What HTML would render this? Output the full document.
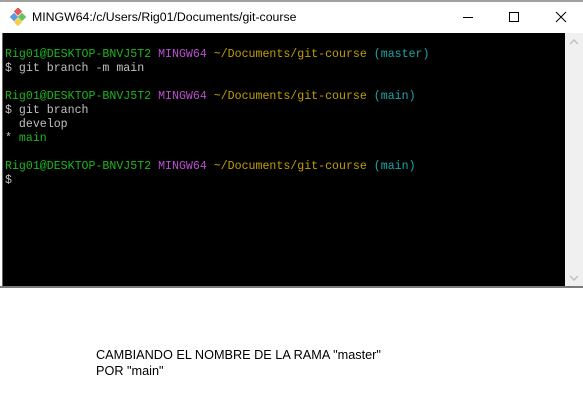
<!DOCTYPE html>
<html><head><meta charset="utf-8"><style>
html,body{margin:0;padding:0;width:583px;height:416px;background:#fff;overflow:hidden;position:relative;font-family:"Liberation Sans",sans-serif}
.topline{position:absolute;left:0;top:0;width:583px;height:2px;background:#a0a0a0}
.title{position:absolute;left:32px;top:10px;font-size:12.3px;color:#000}
.term{position:absolute;left:2px;top:33px;width:563px;height:254px;background:#000;border-left:1px solid #666}
.sb{position:absolute;left:565px;top:33px;width:18px;height:254px;background:#f0f0f0}
.bot{position:absolute;left:0;top:286px;width:583px;height:2px;background:#7a7a7a}
pre{position:absolute;left:5px;top:48px;margin:0;font-family:"Liberation Mono",monospace;font-size:11.6px;line-height:14px;color:#c0c0c0}
.g{color:#1db51d}.m{color:#b94fd0}.y{color:#c0a000}.c{color:#19a8a8}
.cap{position:absolute;left:96px;top:347px;font-size:12.7px;line-height:16px;color:#000}
</style></head><body>
<div class="topline"></div>
<svg style="position:absolute;left:10px;top:8px" width="18" height="18" viewBox="0 0 18 18">
<rect x="5" y="0.5" width="6" height="6" transform="rotate(45 8 3.5)" fill="#e05a5a"/>
<rect x="1" y="6" width="6" height="6" transform="rotate(45 4 9)" fill="#5a9ae0"/>
<rect x="9" y="6" width="6" height="6" transform="rotate(45 12 9)" fill="#6ac060"/>
<rect x="5" y="11" width="6" height="6" transform="rotate(45 8 14)" fill="#f0d050"/>
</svg>
<div class="title">MINGW64:/c/Users/Rig01/Documents/git-course</div>
<svg style="position:absolute;left:462px;top:10px" width="120" height="16">
<line x1="1" y1="7.5" x2="11" y2="7.5" stroke="#000"/>
<rect x="47.5" y="2.5" width="9" height="9" fill="none" stroke="#000"/>
<line x1="94" y1="2" x2="104" y2="12" stroke="#000"/><line x1="104" y1="2" x2="94" y2="12" stroke="#000"/>
</svg>
<div class="term"></div>
<div class="sb">
<svg style="position:absolute;left:5px;top:6px" width="8" height="6"><path d="M0 5 L4 1 L8 5" fill="none" stroke="#c0c0c0" stroke-width="1.5"/></svg>
<svg style="position:absolute;left:5px;top:242px" width="8" height="6"><path d="M0 1 L4 5 L8 1" fill="none" stroke="#c0c0c0" stroke-width="1.5"/></svg>
</div>
<div class="bot"></div>
<pre><span class="g">Rig01@DESKTOP-BNVJ5T2</span> <span class="m">MINGW64</span> <span class="y">~/Documents/git-course</span> <span class="c">(master)</span>
$ git branch -m main

<span class="g">Rig01@DESKTOP-BNVJ5T2</span> <span class="m">MINGW64</span> <span class="y">~/Documents/git-course</span> <span class="c">(main)</span>
$ git branch
  develop
* <span class="g">main</span>

<span class="g">Rig01@DESKTOP-BNVJ5T2</span> <span class="m">MINGW64</span> <span class="y">~/Documents/git-course</span> <span class="c">(main)</span>
$</pre>
<div class="cap">CAMBIANDO EL NOMBRE DE LA RAMA "master"<br>POR "main"</div>
</body></html>
